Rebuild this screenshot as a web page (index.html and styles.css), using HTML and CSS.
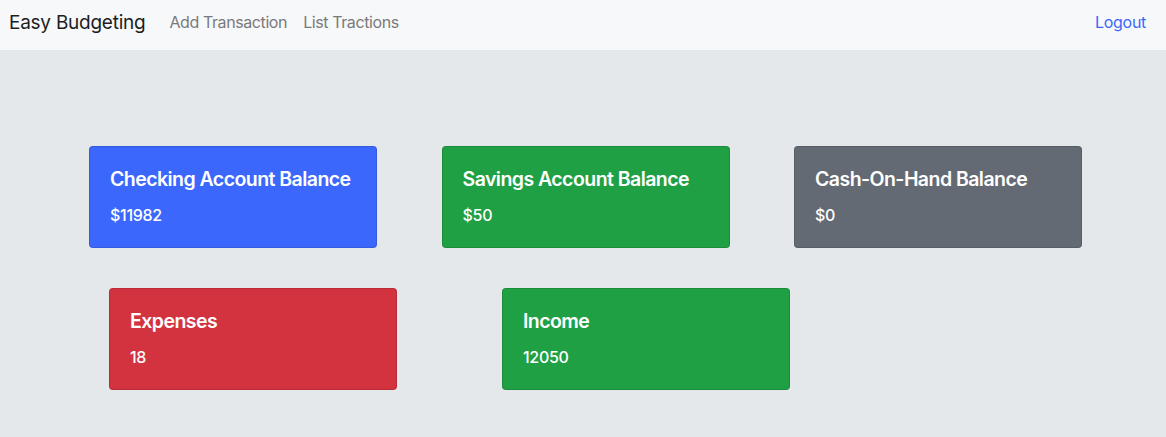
FILE: index.html
```html
<!DOCTYPE html>
<html lang="en">
<head>
<meta charset="utf-8">
<title>Easy Budgeting</title>
<link rel="stylesheet" href="styles.css">
</head>
<body>
<nav class="navbar">
  <a class="brand" href="#">Easy Budgeting</a>
  <a class="nav-link" href="#">Add Transaction</a>
  <a class="nav-link" href="#">List Tractions</a>
  <a class="logout" href="#">Logout</a>
</nav>
<main class="main">
  <div class="row row-top">
    <div class="card blue"><h5>Checking Account Balance</h5><p>$11982</p></div>
    <div class="card green"><h5>Savings Account Balance</h5><p>$50</p></div>
    <div class="card gray"><h5>Cash-On-Hand Balance</h5><p>$0</p></div>
  </div>
  <div class="row row-bottom">
    <div class="card red"><h5>Expenses</h5><p>18</p></div>
    <div class="card green"><h5>Income</h5><p>12050</p></div>
  </div>
</main>
</body>
</html>
```
FILE: styles.css
```css
* { box-sizing: border-box; }
html, body { margin: 0; padding: 0; }
body {
  font-family: Inter, "Noto Sans", sans-serif;
  background: #e5e8eb;
  height: 437px;
  color: #212529;
}
.navbar {
  display: flex;
  align-items: center;
  height: 50px;
  background: #f7f8fa;
  padding: 0 20px 6px 9px;
}
.navbar a { text-decoration: none; }
.brand {
  font-size: 19px;
  letter-spacing: -0.25px;
  color: #1d1d1f;
  margin-right: 24px;
}
.nav-link {
  font-size: 16px;
  letter-spacing: -0.4px;
  color: #7a7a7a;
  margin-right: 16px;
}
.logout {
  margin-left: auto;
  font-size: 16px;
  letter-spacing: -0.3px;
  color: #3c67fd;
}
.main { padding-top: 96px; }
.row { display: flex; }
.row-top { padding-left: 89px; gap: 64.5px; }
.row-bottom { padding-left: 109px; gap: 105px; margin-top: 40px; }
.card {
  width: 288px;
  height: 102px;
  border-radius: 4px;
  padding: 20px 20px;
  color: #fff;
  border: 1px solid rgba(0,0,0,0.12);
}
.card h5 {
  margin: 0 0 14px;
  font-size: 19.5px;
  font-weight: 600;
  letter-spacing: -0.55px;
  line-height: 24px;
  white-space: nowrap;
}
.card p {
  margin: 0;
  font-size: 16px;
  line-height: 20px;
  font-weight: 500;
  letter-spacing: -0.3px;
}
.blue { background: #3c67fd; }
.green { background: #20a044; }
.gray { background: #646a73; }
.red { background: #d3323f; }
```
